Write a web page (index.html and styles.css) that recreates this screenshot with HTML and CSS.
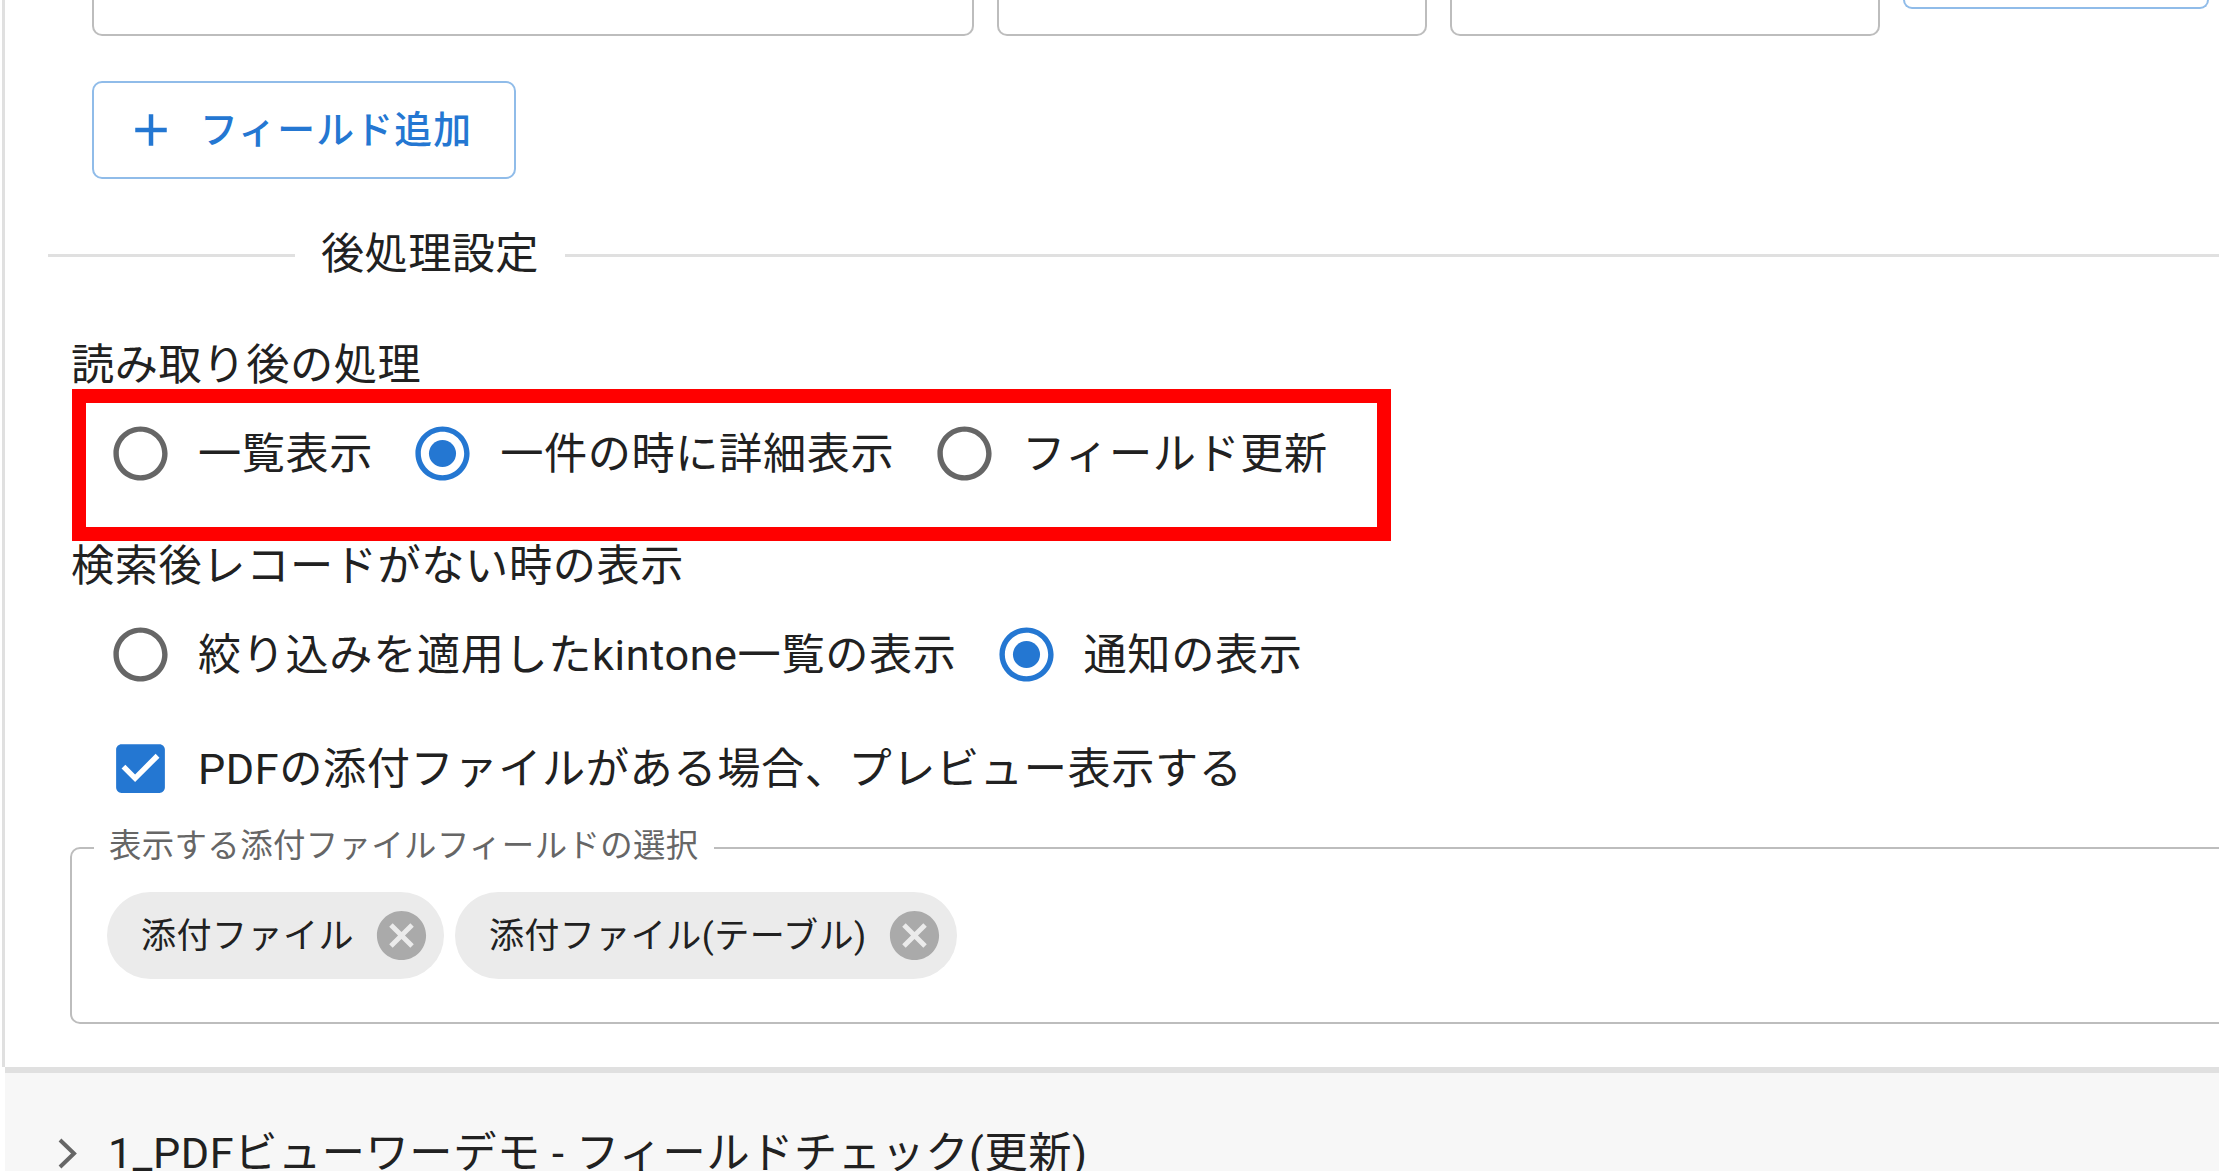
FILE: index.html
```html
<!DOCTYPE html>
<html lang="ja">
<head>
    <meta charset="UTF-8">
    <title>後処理設定</title>
    <link rel="stylesheet" href="styles.css">
</head>
<body>
    <div class="panel">
        <!-- Field rows, cut off by the top of the window -->
        <div class="field-row">
            <div class="field field-name"></div>
            <div class="field field-small"></div>
            <div class="field field-small"></div>
            <div class="field-remove"></div>
        </div>

        <button class="add-btn">
            <svg class="add-icon" viewBox="0 0 24 24"><path d="M19 13h-6v6h-2v-6H5v-2h6V5h2v6h6v2z"/></svg>
            <span>フィールド追加</span>
        </button>

        <div class="divider">
            <span class="divider-line divider-start"></span>
            <span class="divider-text">後処理設定</span>
            <span class="divider-line divider-end"></span>
        </div>

        <div class="group-label first">読み取り後の処理</div>
        <div class="radio-group annotated">
            <label class="radio first-radio">
                <svg class="icon" viewBox="0 0 24 24"><path class="off" d="M12 2C6.48 2 2 6.48 2 12s4.48 10 10 10 10-4.48 10-10S17.52 2 12 2zm0 18c-4.42 0-8-3.58-8-8s3.58-8 8-8 8 3.58 8 8-3.58 8-8 8z"/></svg>
                <span>一覧表示</span>
            </label>
            <label class="radio second-radio">
                <svg class="icon" viewBox="0 0 24 24"><path class="on" d="M12 2C6.48 2 2 6.48 2 12s4.48 10 10 10 10-4.48 10-10S17.52 2 12 2zm0 18c-4.42 0-8-3.58-8-8s3.58-8 8-8 8 3.58 8 8-3.58 8-8 8z"/><circle class="on" cx="12" cy="12" r="5"/></svg>
                <span>一件の時に詳細表示</span>
            </label>
            <label class="radio">
                <svg class="icon" viewBox="0 0 24 24"><path class="off" d="M12 2C6.48 2 2 6.48 2 12s4.48 10 10 10 10-4.48 10-10S17.52 2 12 2zm0 18c-4.42 0-8-3.58-8-8s3.58-8 8-8 8 3.58 8 8-3.58 8-8 8z"/></svg>
                <span>フィールド更新</span>
            </label>
            <div class="red-box"></div>
        </div>

        <div class="group-label">検索後レコードがない時の表示</div>
        <div class="radio-group plain">
            <label class="radio first-radio">
                <svg class="icon" viewBox="0 0 24 24"><path class="off" d="M12 2C6.48 2 2 6.48 2 12s4.48 10 10 10 10-4.48 10-10S17.52 2 12 2zm0 18c-4.42 0-8-3.58-8-8s3.58-8 8-8 8 3.58 8 8-3.58 8-8 8z"/></svg>
                <span>絞り込みを適用したkintone一覧の表示</span>
            </label>
            <label class="radio">
                <svg class="icon" viewBox="0 0 24 24"><path class="on" d="M12 2C6.48 2 2 6.48 2 12s4.48 10 10 10 10-4.48 10-10S17.52 2 12 2zm0 18c-4.42 0-8-3.58-8-8s3.58-8 8-8 8 3.58 8 8-3.58 8-8 8z"/><circle class="on" cx="12" cy="12" r="5"/></svg>
                <span>通知の表示</span>
            </label>
        </div>

        <label class="check-row">
            <svg class="icon" viewBox="0 0 24 24"><path class="on" d="M19 3H5c-1.11 0-2 .9-2 2v14c0 1.1.89 2 2 2h14c1.11 0 2-.9 2-2V5c0-1.1-.89-2-2-2zm-9 14l-5-5 1.41-1.41L10 14.17l7.59-7.59L19 8l-9 9z"/></svg>
            <span>PDFの添付ファイルがある場合、プレビュー表示する</span>
        </label>

        <div class="select-box">
            <span class="select-legend">表示する添付ファイルフィールドの選択</span>
            <div class="chip">
                <span>添付ファイル</span>
                <svg class="chip-delete" viewBox="0 0 24 24"><path d="M12 2C6.47 2 2 6.47 2 12s4.47 10 10 10 10-4.47 10-10S17.53 2 12 2zm5 13.59L15.59 17 12 13.41 8.41 17 7 15.59 10.59 12 7 8.41 8.41 7 12 10.59 15.59 7 17 8.41 13.41 12 17 15.59z"/></svg>
            </div>
            <div class="chip">
                <span>添付ファイル(テーブル)</span>
                <svg class="chip-delete" viewBox="0 0 24 24"><path d="M12 2C6.47 2 2 6.47 2 12s4.47 10 10 10 10-4.47 10-10S17.53 2 12 2zm5 13.59L15.59 17 12 13.41 8.41 17 7 15.59 10.59 12 7 8.41 8.41 7 12 10.59 15.59 7 17 8.41 13.41 12 17 15.59z"/></svg>
            </div>
        </div>
    </div>

    <div class="next-section">
        <svg class="chevron" viewBox="0 0 19 31"><path d="M2 2l14 13.5L2 29"/></svg>
        <span class="next-title">1_PDFビューワーデモ - フィールドチェック(更新)</span>
    </div>
</body>
</html>
```

FILE: styles.css
```css
/* General Reset */
* {
    margin: 0;
    padding: 0;
    box-sizing: border-box;
}
html, body {
    height: 100%;
    overflow: hidden;
}
body {
    font-family: Roboto, 'Noto Sans CJK JP', sans-serif;
    font-size: 43.2px;
    letter-spacing: 0.6px;
    color: #212121;
    background: #fff;
    padding-left: 2px;
}
.panel {
    height: 1067px;
    border-left: 3px solid #e0e0e0;
}
.field-row {
    display: flex;
    gap: 23px;
    height: 36px;
    margin-left: 87px;
}
.field {
    border: 2px solid #bdbdbd;
    border-top: none;
    border-radius: 0 0 10px 10px;
}
.field-name {
    width: 882px;
}
.field-small {
    width: 430px;
}
.field-remove {
    width: 306px;
    height: 9px;
    border: 2px solid #90bce9;
    border-top: none;
    border-radius: 0 0 10px 10px;
}
.add-btn {
    display: flex;
    align-items: center;
    gap: 22px;
    width: 424px;
    height: 98px;
    margin: 45px 0 0 87px;
    padding-left: 30px;
    font-family: inherit;
    font-size: 37.8px;
    font-weight: 500;
    letter-spacing: 1.2px;
    color: #2477d2;
    background: #fff;
    border: 2px solid #90bce9;
    border-radius: 10px;
}
.add-btn span {
    margin-bottom: 8px;
}
.add-icon {
    width: 54px;
    height: 54px;
    fill: #2477d2;
}
.divider {
    display: flex;
    align-items: center;
    height: 58px;
    margin: 47px 0 0 43px;
}
.divider-line {
    height: 3px;
    background: #e0e0e0;
}
.divider-start {
    width: 247px;
}
.divider-end {
    flex: 1;
}
.divider-text {
    padding: 0 26px;
    line-height: 58px;
    letter-spacing: 0.4px;
}
.group-label {
    height: 50px;
    margin-left: 66px;
    line-height: 55px;
}
.group-label.first {
    margin-top: 54px;
}
.radio-group {
    display: flex;
    position: relative;
    margin-left: 67px;
    padding-left: 36px;
}
.annotated {
    height: 150px;
    margin-top: 1px;
    padding-top: 32px;
}
.plain {
    margin-top: 33px;
}
.radio {
    display: flex;
    align-items: center;
    gap: 25px;
    height: 65px;
}
.radio span, .check-row span {
    margin-bottom: 8px;
}
.first-radio {
    margin-right: 37px;
}
.plain .first-radio {
    margin-right: 37px;
}
.second-radio {
    margin-right: 38px;
}
.icon {
    width: 65px;
    height: 65px;
    flex-shrink: 0;
}
.off {
    fill: #666;
}
.on {
    fill: #2477d2;
}
.red-box {
    position: absolute;
    left: 0;
    top: 0;
    width: 1319px;
    height: 152px;
    border: 14px solid #f00;
}
.check-row {
    display: flex;
    align-items: center;
    gap: 25px;
    height: 65px;
    margin: 49px 0 0 103px;
}
.select-box {
    display: flex;
    align-items: flex-start;
    gap: 11px;
    position: relative;
    height: 177px;
    margin: 46px -60px 0 65px;
    padding: 43px 0 0 35px;
    border: 2px solid #bdbdbd;
    border-radius: 10px;
}
.select-legend {
    position: absolute;
    left: 22px;
    top: -25px;
    padding: 0 15px;
    font-size: 32.4px;
    letter-spacing: 0.4px;
    line-height: 44px;
    color: #666;
    background: #fff;
}
.chip {
    display: flex;
    align-items: center;
    gap: 18px;
    height: 87px;
    padding: 0 0 0 34px;
    font-size: 35.1px;
    letter-spacing: 0.4px;
    border-radius: 44px;
    background: #ebebeb;
}
.chip span {
    margin-bottom: 6px;
}
.chip-delete {
    width: 59px;
    height: 59px;
    margin-right: 13px;
    fill: #aaa;
}
.next-section {
    display: flex;
    gap: 31px;
    height: 104px;
    margin-left: 3px;
    padding: 56px 0 0 53px;
    background: #f7f7f7;
    border-top: 6px solid #e0e0e0;
}
.chevron {
    width: 19px;
    height: 31px;
    margin-top: 9px;
    fill: none;
    stroke: #666;
    stroke-width: 4;
}
.next-title {
    line-height: 50px;
    white-space: nowrap;
}
```
